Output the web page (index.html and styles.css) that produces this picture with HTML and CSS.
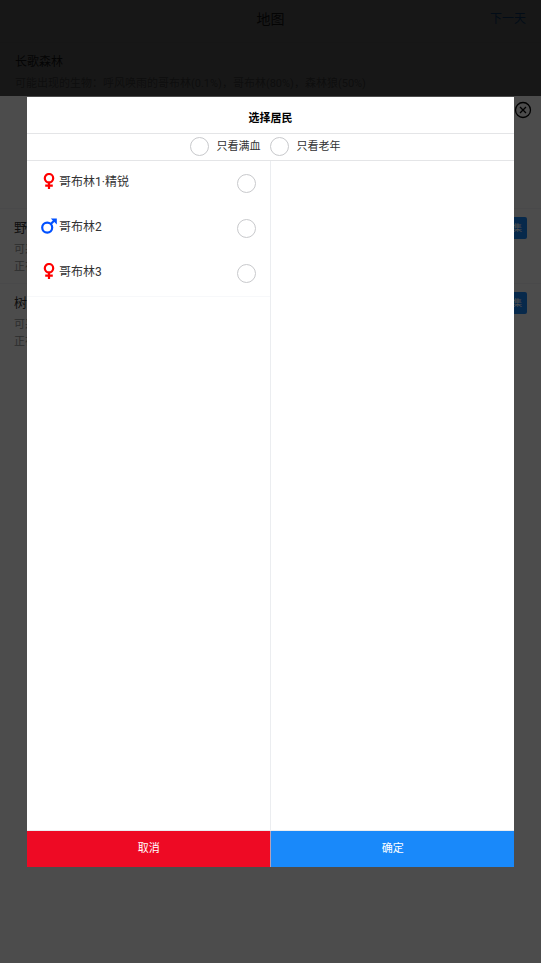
FILE: index.html
```html
<!DOCTYPE html>
<html lang="zh-CN">
<head>
<meta charset="utf-8">
<meta name="viewport" content="width=device-width, initial-scale=1">
<title>地图</title>
<link rel="stylesheet" href="styles.css">
</head>
<body>
<main class="page">
  <header class="nav">
    <h1 class="nav-title">地图</h1>
    <a class="nav-link" href="#next">下一天</a>
  </header>
  <section class="place">
    <h2 class="place-name">长歌森林</h2>
    <p class="place-info">可能出现的生物：呼风唤雨的哥布林(0.1%)，哥布林(80%)，森林狼(50%)</p>
  </section>
</main>

<div class="overlay"></div>

<section class="sheet">
  <div class="sheet-head">
    <button class="close" type="button" aria-label="关闭">
      <svg viewBox="0 0 18 18" width="18" height="18"><circle cx="9" cy="9" r="7.5"/><path d="M6 6l6 6M12 6l-6 6"/></svg>
    </button>
  </div>
  <ul class="jobs">
    <li class="job">
      <div class="job-top"><h3 class="job-name">野果</h3><button class="gather" type="button">采集</button></div>
      <p class="job-line">可采</p>
      <p class="job-line">正在</p>
    </li>
    <li class="job">
      <div class="job-top"><h3 class="job-name">树木</h3><button class="gather" type="button">采集</button></div>
      <p class="job-line">可采</p>
      <p class="job-line">正在</p>
    </li>
  </ul>
</section>

<div class="overlay"></div>

<div class="center">
  <form class="dialog" role="dialog" aria-labelledby="dialog-title">
    <h2 class="dialog-title" id="dialog-title">选择居民</h2>
    <div class="filters">
      <label class="filter"><input class="check" type="checkbox">只看满血</label>
      <label class="filter"><input class="check" type="checkbox">只看老年</label>
    </div>
    <div class="columns">
      <ul class="people">
        <li><label class="person">
          <svg class="sex female" viewBox="0 0 16 16" width="16" height="16"><circle cx="8" cy="5.2" r="4.2"/><path d="M8 9.4V16M4.2 12.6h7.6"/></svg>
          <span class="person-name">哥布林1·精锐</span><input class="check" type="checkbox">
        </label></li>
        <li><label class="person">
          <svg class="sex male" viewBox="0 0 16 16" width="16" height="16"><circle cx="6.2" cy="9.6" r="5"/><path d="M9.8 6L14 1.8"/><path class="tip" d="M9.8 0.4H15.8V6.4Z"/></svg>
          <span class="person-name">哥布林2</span><input class="check" type="checkbox">
        </label></li>
        <li><label class="person">
          <svg class="sex female" viewBox="0 0 16 16" width="16" height="16"><circle cx="8" cy="5.2" r="4.2"/><path d="M8 9.4V16M4.2 12.6h7.6"/></svg>
          <span class="person-name">哥布林3</span><input class="check" type="checkbox">
        </label></li>
      </ul>
      <div class="chosen"></div>
    </div>
    <div class="actions">
      <button class="action cancel" type="button">取消</button>
      <button class="action confirm" type="button">确定</button>
    </div>
  </form>
</div>
</body>
</html>
```
FILE: styles.css
```css
* { box-sizing: border-box; }

body {
  margin: 0;
  min-height: 100vh;
  background: #fff;
  color: #323233;
  font: 11px/16px Roboto, "Noto Sans CJK SC", sans-serif;
}

h1, h2, h3, p, ul { margin: 0; padding: 0; list-style: none; }
h1, h2, h3 { font-weight: 400; }
button { border: 0; font: inherit; cursor: pointer; }

.overlay {
  position: fixed;
  inset: 0;
  background: rgba(0, 0, 0, 0.7);
}

/* Map page */
.nav {
  display: grid;
  grid-template-columns: 1fr auto 1fr;
  align-items: center;
  height: 43px;
  padding: 0 15px 4px;
  border-bottom: 1px solid #ebedf0;
}
.nav-title { grid-column: 2; font-size: 14px; }
.nav-link {
  justify-self: end;
  color: #1989fa;
  font-size: 12px;
  text-decoration: none;
}
.place { padding: 10px 15px; }
.place-name { font-size: 12px; line-height: 18px; }
.place-info { margin-top: 5px; color: #969799; white-space: nowrap; }

/* Gathering sheet */
.sheet {
  position: fixed;
  inset: 10% 0 0;
  background: #fff;
}
.sheet-head {
  display: flex;
  justify-content: flex-end;
  height: 112px;
  padding: 5px 9px;
}
.close {
  width: 18px;
  height: 18px;
  padding: 0;
  background: none;
}
.close svg {
  display: block;
  fill: none;
  stroke: #000;
  stroke-width: 1.3;
}
.job { padding: 8px 14px; border-top: 1px solid #f5f6f7; }
.job-top {
  display: flex;
  align-items: center;
  justify-content: space-between;
  height: 22px;
}
.job-name { font-size: 13px; }
.gather {
  height: 22px;
  padding: 0 5px;
  border-radius: 2px;
  background: #1989fa;
  color: #fff;
  font-size: 9px;
}
.job-line { color: #969799; line-height: 17px; }
.job-top + .job-line { margin-top: 2px; }

/* Resident picker */
.center {
  position: fixed;
  inset: 0;
  display: flex;
  align-items: center;
  justify-content: center;
  padding-top: 1px;
}
.dialog {
  display: flex;
  flex-direction: column;
  width: 90%;
  height: 80%;
  background: #fff;
}
.dialog-title {
  padding: 14px 0 6px;
  border-bottom: 1px solid #e4e5e7;
  color: #000;
  font-size: 11px;
  font-weight: 700;
  text-align: center;
}
.filters {
  display: flex;
  justify-content: center;
  padding: 3px 0 4px;
  border-bottom: 1px solid #e4e5e7;
}
.filter {
  display: flex;
  align-items: center;
  gap: 7px;
  margin-right: 10px;
}
.check {
  appearance: none;
  flex: none;
  width: 19px;
  height: 19px;
  margin: 0;
  border: 1px solid #c8c9cc;
  border-radius: 50%;
}
.check:checked { border-color: #1989fa; background: #1989fa; }
.columns {
  display: grid;
  grid-template-columns: 1fr 1fr;
  flex: 1;
}
.chosen { border-left: 1px solid #ebedf0; }
.people li:last-child { border-bottom: 1px solid #f7f8fa; }
.person {
  display: flex;
  align-items: center;
  gap: 2px;
  height: 45px;
  padding: 0 14px;
}
.person-name { flex: 1; padding-bottom: 4px; font-size: 12px; }
.sex { margin-bottom: 5px; fill: none; stroke-width: 2.2; }
.female { stroke: #f00; }
.male { stroke: #0050ff; }
.tip { fill: #0050ff; stroke: none; }
.actions {
  display: grid;
  grid-template-columns: 1fr 1fr;
  height: 37px;
  border-top: 1px solid #ebedf0;
}
.action { padding: 0; color: #fff; }
.cancel { background: #ee0a24; }
.confirm { border-left: 1px solid #b5a0b8; background: #1989fa; }
```
